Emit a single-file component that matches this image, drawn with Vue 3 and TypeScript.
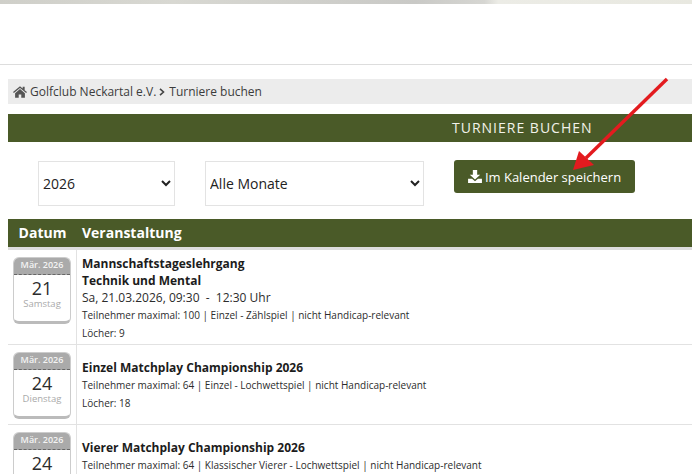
<template>
  <div class="page">
    <div class="photo-strip"></div>
    <header class="top-space"></header>
    <main class="content">
      <nav class="crumbs">
        <svg class="home" viewBox="0 0 24 20" aria-hidden="true">
          <path d="M12 0 0 10.2l1.5 1.7L12 3.2l10.5 8.7 1.5-1.7-4-3.4V1.2h-3.4v2.9z" />
          <path d="M12 5 3.6 12v8h6.2v-5.6h4.4V20h6.2v-8z" />
        </svg>
        <span>Golfclub Neckartal e.V.</span>
        <svg class="sep" viewBox="0 0 6 8" aria-hidden="true">
          <path d="M1 .8 4.500 4 1 7.200" />
        </svg>
        <span>Turniere buchen</span>
      </nav>

      <h1 class="title"><span>TURNIERE BUCHEN</span></h1>

      <div class="filters">
        <select class="sel sel-year">
          <option>2026</option>
        </select>
        <select class="sel sel-month">
          <option>Alle Monate</option>
        </select>
        <button class="save" type="button">
          <svg class="dl" viewBox="0 0 16 15" aria-hidden="true">
            <path d="M5.500 0h5v5.500H14L8 11 2 5.500h3.500z" />
            <path d="M0 10h4.600L8 13l3.400-3H16v5H0z" />
          </svg>
          Im Kalender speichern
        </button>
      </div>

      <div class="thead">
        <div class="col-date">Datum</div>
        <div class="col-event">Veranstaltung</div>
      </div>

      <div v-for="ev in events" :key="ev.title" class="row" :class="ev.cls">
        <div class="cell-date">
          <div class="cal">
            <div class="cal-month">{{ ev.month }}</div>
            <div class="cal-day">{{ ev.day }}</div>
            <div class="cal-week">{{ ev.weekday }}</div>
          </div>
        </div>
        <div class="cell-event">
          <div class="ev-title" v-for="t in ev.titleLines" :key="t">{{ t }}</div>
          <div class="ev-time" v-if="ev.time">{{ ev.time }}</div>
          <div class="ev-meta">{{ ev.meta }}</div>
          <div class="ev-meta ev-holes" v-if="ev.holes">Löcher: {{ ev.holes }}</div>
        </div>
      </div>
    </main>

    <svg class="arrow" viewBox="0 0 692 474" aria-hidden="true">
      <line x1="667" y1="79" x2="586" y2="158" stroke="#e31b1f" stroke-width="3.4" />
      <polygon points="573,170 579,151 594,165" fill="#e31b1f" />
    </svg>
  </div>
</template>

<script setup lang="ts">
interface EventRow {
  title: string
  titleLines: string[]
  month: string
  day: string
  weekday: string
  time?: string
  meta: string
  holes?: string
  cls: string
}

const events: EventRow[] = [
  {
    title: 'lehrgang',
    titleLines: ['Mannschaftstageslehrgang', 'Technik und Mental'],
    month: 'Mär. 2026',
    day: '21',
    weekday: 'Samstag',
    time: 'Sa, 21.03.2026, 09:30  -  12:30 Uhr',
    meta: 'Teilnehmer maximal: 100 | Einzel - Zählspiel | nicht Handicap-relevant',
    holes: '9',
    cls: 'row-a',
  },
  {
    title: 'einzel',
    titleLines: ['Einzel Matchplay Championship 2026'],
    month: 'Mär. 2026',
    day: '24',
    weekday: 'Dienstag',
    meta: 'Teilnehmer maximal: 64 | Einzel - Lochwettspiel | nicht Handicap-relevant',
    holes: '18',
    cls: 'row-b',
  },
  {
    title: 'vierer',
    titleLines: ['Vierer Matchplay Championship 2026'],
    month: 'Mär. 2026',
    day: '24',
    weekday: 'Dienstag',
    meta: 'Teilnehmer maximal: 64 | Klassischer Vierer - Lochwettspiel | nicht Handicap-relevant',
    holes: '18',
    cls: 'row-b',
  },
]
</script>

<style>
html, body { margin: 0; height: 100%; overflow: hidden; background: #fff; }
</style>

<style scoped>
.page {
  position: relative;
  width: 692px;
  height: 474px;
  overflow: hidden;
  font-family: "Open Sans", sans-serif;
  color: #222;
  background: #fff;
}
.photo-strip {
  height: 4px;
  background: linear-gradient(90deg, #cfcfc9 0, #d8d8d2 25%, #c9c9c6 60%, #d6d6d2 70%, #ecece6 72%, #e8e8e0 100%);
}
.top-space { height: 60px; border-bottom: 1px solid #ddd; }
.content { padding: 14px 0 0 8px; }
.crumbs {
  height: 25px;
  background: #ececec;
  display: flex;
  align-items: center;
  gap: 3px;
  padding-left: 5px;
  font-size: 12px;
  color: #3c3c3c;
}
.home { width: 14px; height: 12px; fill: #555; }
.sep { width: 6px; height: 8px; fill: none; stroke: #444; stroke-width: 1.6; margin-right: 1px; }
.title {
  margin: 10px 0 0;
  height: 28px;
  background: #4a5a28;
  color: #f2f2ea;
  font-size: 14px;
  font-weight: 400;
  letter-spacing: 1px;
  line-height: 28px;
  padding-left: 444px;
}
.filters {
  display: flex;
  align-items: flex-start;
  padding: 18px 0 0 30px;
  height: 59px;
}
.sel {
  height: 45px;
  margin-top: 1px;
  border: 1px solid #e3e3e3;
  background: #fff;
  font-family: inherit;
  font-size: 14px;
  color: #222;
  box-sizing: border-box;
}
.sel-year { width: 137px; }
.sel-month { width: 219px; margin-left: 30px; }
.save {
  margin-left: 30px;
  width: 181px;
  height: 33px;
  border: 0;
  border-radius: 3px;
  background: #4a5a28;
  color: #fff;
  font-family: inherit;
  font-size: 13px;
  display: flex;
  align-items: center;
  justify-content: center;
  gap: 3px;
  padding: 0;
}
.dl { width: 14px; height: 13px; fill: #fff; }
.thead {
  display: flex;
  height: 28px;
  line-height: 28px;
  background: #4a5a28;
  color: #fff;
  font-size: 14px;
  font-weight: 700;
  border-bottom: 3px solid #ddd;
}
.col-date { width: 69px; text-align: center; }
.col-event { padding-left: 5px; }
.row { display: flex; border-bottom: 1px solid #e2e2e2; box-sizing: border-box; }
.row-a { height: 95px; }
.row-b { height: 80px; }
.cell-date {
  width: 69px;
  border-right: 1px solid #e2e2e2;
  padding: 7px 0 0 5px;
  box-sizing: border-box;
  flex: none;
}
.cal {
  width: 58px;
  height: 67px;
  box-sizing: border-box;
  border: 1px solid #ccc;
  border-bottom: 3px solid #bbb;
  border-radius: 6px;
  text-align: center;
  overflow: hidden;
}
.cal-month {
  height: 16px;
  line-height: 13px;
  background: #aaa;
  color: #f4f4f4;
  font-size: 9px;
  font-weight: 600;
  border-bottom: 1px dashed #666;
}
.cal-day { font-size: 18px; line-height: 20px; margin-top: 3px; color: #2c2c2c; }
.cal-week { font-size: 9.500px; line-height: 11px; color: #aaa; }
.cell-event { padding: 5px 0 0 5px; white-space: nowrap; }
.row-b .cell-event { padding-top: 14px; }
.ev-title { font-size: 12px; line-height: 17px; font-weight: 700; color: #1c1c1c; }
.ev-time { font-size: 12px; line-height: 17px; white-space: pre; color: #2c2c2c; }
.ev-meta { font-size: 10px; line-height: 17px; margin-top: 1px; color: #2c2c2c; white-space: pre; }
.arrow { position: absolute; inset: 0; width: 692px; height: 474px; pointer-events: none; }
</style>
